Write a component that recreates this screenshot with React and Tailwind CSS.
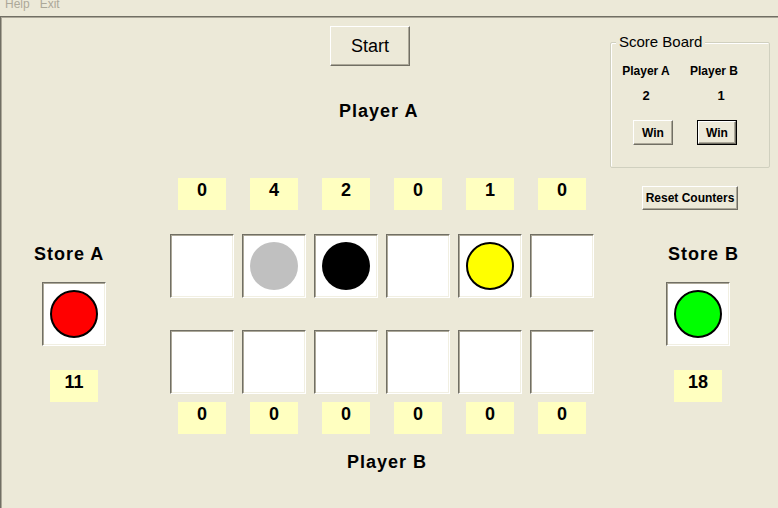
import React from 'react'

const topCounts = [0, 4, 2, 0, 1, 0]
const bottomCounts = [0, 0, 0, 0, 0, 0]
const topPits = [null, 'gray', 'black', null, 'yellow', null]
const bottomPits = [null, null, null, null, null, null]

const btn =
  'bg-[#ece9d8] border border-t-white border-l-white border-r-[#716f64] border-b-[#716f64] shadow-[inset_-1px_-1px_0_#aca899] flex items-center justify-center whitespace-nowrap'

function Stone({ color }) {
  if (color === 'gray') return <div className="w-12 h-12 rounded-full bg-[#c0c0c0]" />
  if (color === 'black') return <div className="w-12 h-12 rounded-full bg-black" />
  if (color === 'yellow') return <div className="w-12 h-12 rounded-full bg-[#ffff00] border-2 border-black" />
  if (color === 'red') return <div className="w-12 h-12 rounded-full bg-[#ff0000] border-2 border-black" />
  if (color === 'green') return <div className="w-12 h-12 rounded-full bg-[#00ff00] border-2 border-black" />
  return null
}

function Pit({ color, className = '' }) {
  return (
    <div
      className={
        'w-16 h-16 bg-white border border-t-[#716f64] border-l-[#716f64] border-r-white border-b-white shadow-[inset_1px_1px_0_#aca899,inset_-1px_-1px_0_#f1efe2] flex items-center justify-center ' +
        className
      }
    >
      <Stone color={color} />
    </div>
  )
}

function Count({ value, className = '' }) {
  return (
    <div className={'w-12 h-8 bg-[#ffffc0] flex justify-center pt-[2px] text-[18px] leading-[20px] font-bold ' + className}>
      {value}
    </div>
  )
}

const label = 'text-[18px] leading-[20px] font-bold tracking-[1px] whitespace-nowrap'

export default function App() {
  return (
    <div className="w-[778px] h-[508px] bg-[#ece9d8] overflow-hidden flex flex-col font-['Liberation_Sans',Arial,sans-serif] text-black">
      {/* menu */}
      <div className="h-4 overflow-hidden flex gap-[10px] px-[5px] text-[12px] leading-[12px] text-[#aca899]">
        <span className="-mt-[2px]">Help</span>
        <span className="-mt-[2px]">Exit</span>
      </div>

      <div className="flex-1 flex border-t border-l border-[#716f64] shadow-[inset_1px_1px_0_#aca899]">
        {/* store A */}
        <div className="w-[169px] flex flex-col pt-[227px]">
          <div className={label + ' ml-[33px]'}>Store A</div>
          <Pit color="red" className="ml-[41px] mt-[18px]" />
          <Count value={11} className="ml-[49px] mt-[24px]" />
        </div>

        {/* board */}
        <div className="w-[424px] flex flex-col">
          <button className={btn + ' ml-[160px] mt-[9px] w-20 h-10 text-[18px]'}>Start</button>
          <div className={label + ' ml-[169px] mt-[35px]'}>Player A</div>
          <div className="flex gap-6 ml-2 mt-[57px]">
            {topCounts.map((c, i) => (
              <Count key={i} value={c} />
            ))}
          </div>
          <div className="flex gap-2 mt-6">
            {topPits.map((p, i) => (
              <Pit key={i} color={p} />
            ))}
          </div>
          <div className="flex gap-2 mt-8">
            {bottomPits.map((p, i) => (
              <Pit key={i} color={p} />
            ))}
          </div>
          <div className="flex gap-6 ml-2 mt-2">
            {bottomCounts.map((c, i) => (
              <Count key={i} value={c} />
            ))}
          </div>
          <div className={label + ' ml-[177px] mt-[18px]'}>Player B</div>
        </div>

        {/* score board + store B */}
        <div className="flex-1 flex flex-col">
          <div className="relative ml-4 mt-[25px] w-40 h-[126px] border border-[#d0d0bf] rounded-[2px] shadow-[inset_1px_1px_0_#fff]">
            <span className="absolute -top-[10px] left-[5px] px-[3px] bg-[#ece9d8] text-[15px] leading-[17px] whitespace-nowrap">
              Score Board
            </span>
            <div className="flex ml-[11px] mt-[21px] text-[12px] leading-[14px] font-bold whitespace-nowrap">
              <div className="w-12 flex justify-center">Player A</div>
              <div className="w-12 ml-5 flex justify-center">Player B</div>
            </div>
            <div className="flex ml-[11px] mt-[11px] text-[13px] leading-[14px] font-bold">
              <div className="w-12 text-center">2</div>
              <div className="w-12 ml-5 pl-[14px] text-center">1</div>
            </div>
            <div className="flex mt-[17px] text-[12px] font-bold">
              <button className={btn + ' ml-[22px] w-10 h-[25px]'}>Win</button>
              <button className="ml-6 w-10 h-[25px] border border-black flex">
                <span className={btn + ' flex-1'}>Win</span>
              </button>
            </div>
          </div>
          <button className={btn + ' ml-12 mt-[18px] w-24 h-6 text-[12px] font-bold'}>Reset Counters</button>
          <div className={label + ' ml-[74px] mt-[34px]'}>Store B</div>
          <Pit color="green" className="ml-[72px] mt-[18px]" />
          <Count value={18} className="ml-[80px] mt-[24px]" />
        </div>
      </div>
    </div>
  )
}
